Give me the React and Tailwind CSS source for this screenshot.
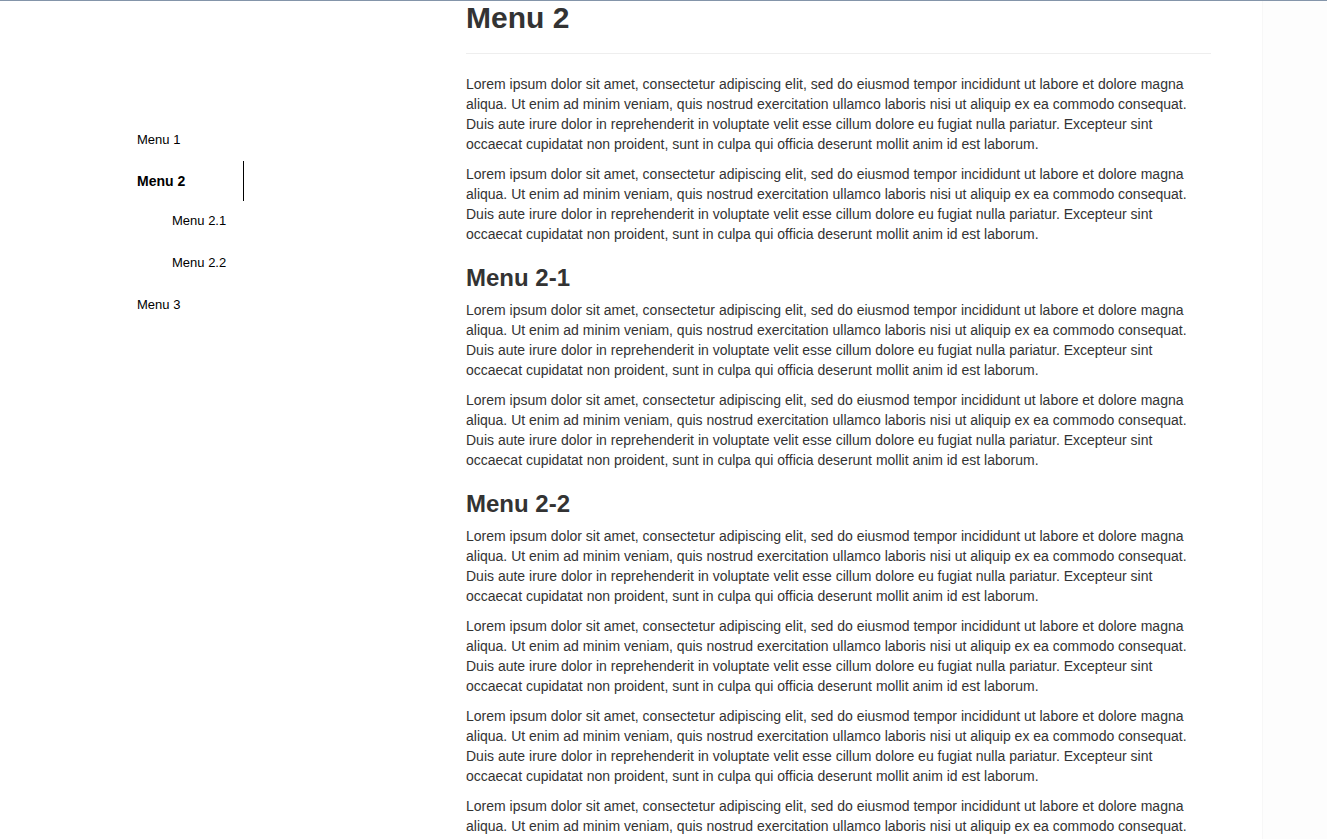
import React from "react";

const LOREM =
  "Lorem ipsum dolor sit amet, consectetur adipiscing elit, sed do eiusmod tempor incididunt ut labore et dolore magna aliqua. Ut enim ad minim veniam, quis nostrud exercitation ullamco laboris nisi ut aliquip ex ea commodo consequat. Duis aute irure dolor in reprehenderit in voluptate velit esse cillum dolore eu fugiat nulla pariatur. Excepteur sint occaecat cupidatat non proident, sunt in culpa qui officia deserunt mollit anim id est laborum.";

function Para() {
  return <p className="mb-[10px]">{LOREM}</p>;
}

function NavLink({ children, active, nested }) {
  return (
    <a
      href="#"
      className={
        active
          ? "block h-[40px] leading-[40px] pl-[15px] font-bold text-[14px] text-black border-r border-black"
          : nested
          ? "block h-[40px] leading-[40px] pl-[50px] text-[13px] text-black"
          : "block h-[40px] leading-[40px] pl-[15px] text-[13px] text-black"
      }
    >
      {children}
    </a>
  );
}

export default function App() {
  return (
    <div
      className="h-[839px] overflow-hidden border-t border-[#8495aa] bg-white text-[#333] text-[14px] leading-[20px] flex"
      style={{ fontFamily: '"Liberation Sans", Arial, Helvetica, sans-serif' }}
    >
      <div className="w-[466px] shrink-0 pl-[122px] pt-[119px]">
        <ul className="w-[122px]">
          <li>
            <NavLink>Menu 1</NavLink>
          </li>
          <li className="mt-[1px]">
            <NavLink active>Menu 2</NavLink>
            <ul>
              <li>
                <NavLink nested>Menu 2.1</NavLink>
              </li>
              <li className="mt-[2px]">
                <NavLink nested>Menu 2.2</NavLink>
              </li>
            </ul>
          </li>
          <li className="mt-[2px]">
            <NavLink>Menu 3</NavLink>
          </li>
        </ul>
      </div>

      <div className="w-[745px] shrink-0">
        <div className="border-b border-[#eee] pb-[9px] mb-[20px]">
          <h2 className="text-[30px] leading-[33px] font-bold mb-[10px]">Menu 2</h2>
        </div>
        <Para />
        <Para />

        <h3 className="text-[24px] leading-[26px] font-bold mt-[20px] pt-[1px] mb-[9px]">Menu 2-1</h3>
        <Para />
        <Para />

        <h3 className="text-[24px] leading-[26px] font-bold mt-[20px] pt-[1px] mb-[9px]">Menu 2-2</h3>
        <Para />
        <Para />
        <Para />
        <Para />
        <Para />
      </div>

      <div className="flex-1" />
      <div className="w-[65px] shrink-0 border-l border-[#f7f7f7] bg-[#fdfdfd]" />
    </div>
  );
}
